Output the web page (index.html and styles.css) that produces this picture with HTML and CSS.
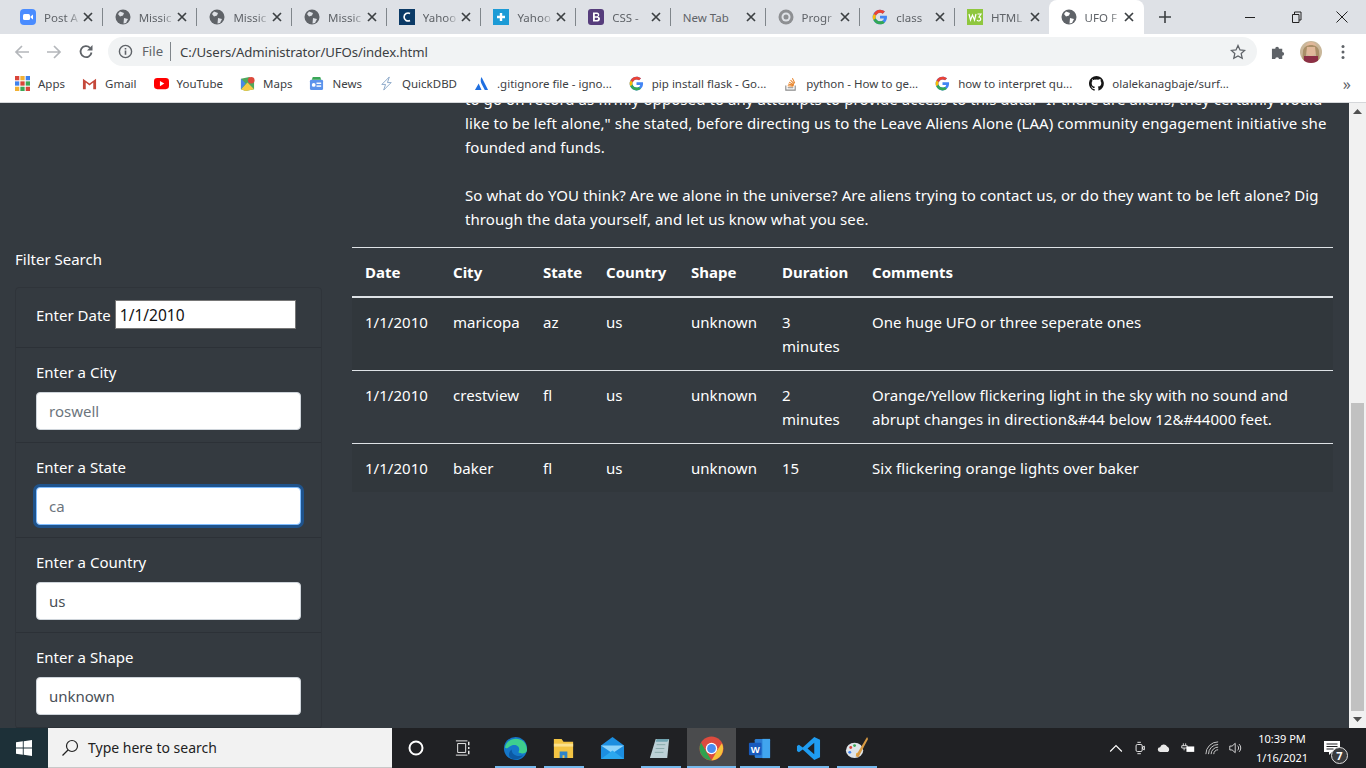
FILE: index.html
```html
<!doctype html>
<html>
	<head>
		<title>UFO Finder</title>
		<link rel="stylesheet" href="styles.css">
	</head>
	<body>

		<svg class="defs" width="0" height="0">
			<defs>
				<g id="g-logo">
					<path d="M44.500 20H24v8.500h11.800C34.700 33.900 30.100 37 24 37c-7.200 0-13-5.800-13-13s5.800-13 13-13c3.100 0 5.900 1.100 8.100 2.900l6.400-6.400C34.600 4.100 29.600 2 24 2 11.800 2 2 11.800 2 24s9.800 22 22 22c11 0 21-8 21-22 0-1.300-.2-2.700-.5-4z" fill="#4285f4"/>
					<path d="M5.300 14.700l7 5.100C14.200 15.100 18.700 11 24 11c3.100 0 5.900 1.100 8.100 2.900l6.400-6.400C34.600 4.100 29.600 2 24 2 15.500 2 8.100 6.900 5.300 14.700z" fill="#ea4335"/>
					<path d="M24 46c5.400 0 10.300-1.800 14.100-5.100l-6.800-5.500C29.200 36.900 26.700 37 24 37c-6 0-11.100-4-12.800-9.500l-7 5.400C7.900 40.700 15.400 46 24 46z" fill="#34a853"/>
					<path d="M5.300 14.700C3 18.500 2 21 2 24s1 6 2.200 8.900l7-5.400C10.600 26.500 11 25 11 24s-.2-2.800.8-4.200z" fill="#fbbc05"/>
				</g>
				<g id="globe">
					<circle cx="8" cy="8" r="7.500" fill="#5f6368"/>
					<path d="M5 2.500 9 4 8 6.500 5 7.500 3 5zM9 9l4 1-2 4-2.500.5z" fill="#dee1e6"/>
				</g>
				<path id="close" d="M1 1l8 8M9 1 1 9" stroke="#3c4043" stroke-width="1.700" fill="none"/>
			</defs>
		</svg>

		<div class="tabstrip">
			<div class="tab"><svg class="fav" viewBox="0 0 16 16"><rect width="16" height="16" rx="4" fill="#4a8cff"/><rect x="3" y="5" width="7" height="6" rx="1.500" fill="#fff"/><path d="M10.500 7.500 13 5.500v5l-2.500-2z" fill="#fff"/></svg><span class="tab-title">Post A</span><svg class="tab-x" viewBox="0 0 10 10"><use href="#close"/></svg></div>
			<div class="tab"><svg class="fav" viewBox="0 0 16 16"><use href="#globe"/></svg><span class="tab-title">Missic</span><svg class="tab-x" viewBox="0 0 10 10"><use href="#close"/></svg></div>
			<div class="tab"><svg class="fav" viewBox="0 0 16 16"><use href="#globe"/></svg><span class="tab-title">Missic</span><svg class="tab-x" viewBox="0 0 10 10"><use href="#close"/></svg></div>
			<div class="tab"><svg class="fav" viewBox="0 0 16 16"><use href="#globe"/></svg><span class="tab-title">Missic</span><svg class="tab-x" viewBox="0 0 10 10"><use href="#close"/></svg></div>
			<div class="tab"><svg class="fav" viewBox="0 0 16 16"><rect width="16" height="16" fill="#0b3a66"/><path d="M11 4.500A4 4 0 1 0 11 11.500" fill="none" stroke="#fff" stroke-width="1.600"/></svg><span class="tab-title">Yahoo</span><svg class="tab-x" viewBox="0 0 10 10"><use href="#close"/></svg></div>
			<div class="tab"><svg class="fav" viewBox="0 0 16 16"><rect width="16" height="16" fill="#1c9bd6"/><path d="M8 4v8M4 8h8" stroke="#fff" stroke-width="2.400"/></svg><span class="tab-title">Yahoo</span><svg class="tab-x" viewBox="0 0 10 10"><use href="#close"/></svg></div>
			<div class="tab"><svg class="fav" viewBox="0 0 16 16"><rect width="16" height="16" rx="3" fill="#563d7c"/><path d="M5 3.500h4a2.200 2.200 0 0 1 1 4.200A2.300 2.300 0 0 1 9 12.500H5zM6.800 5v2.300H8.800a1.150 1.150 0 0 0 0-2.300zM6.800 8.700V11H9a1.150 1.150 0 0 0 0-2.300z" fill="#fff" fill-rule="evenodd"/></svg><span class="tab-title">CSS -</span><svg class="tab-x" viewBox="0 0 10 10"><use href="#close"/></svg></div>
			<div class="tab"><span class="tab-title tab-plain">New Tab</span><svg class="tab-x" viewBox="0 0 10 10"><use href="#close"/></svg></div>
			<div class="tab"><svg class="fav" viewBox="0 0 16 16"><circle cx="8" cy="8" r="7.500" fill="#8d8f92"/><circle cx="8" cy="8" r="4.500" fill="#dee1e6"/><circle cx="8" cy="8" r="2.500" fill="#8d8f92"/></svg><span class="tab-title">Progr</span><svg class="tab-x" viewBox="0 0 10 10"><use href="#close"/></svg></div>
			<div class="tab"><svg class="fav" viewBox="0 0 48 48"><use href="#g-logo"/></svg><span class="tab-title">class</span><svg class="tab-x" viewBox="0 0 10 10"><use href="#close"/></svg></div>
			<div class="tab tab-last"><svg class="fav" viewBox="0 0 16 16"><rect width="16" height="16" fill="#8fc73e"/><path d="M2 5l1.500 6L5.500 6l2 5L9 5M10.500 5H14L12 8a2 2 0 1 1-2 3" fill="none" stroke="#fff" stroke-width="1.200"/></svg><span class="tab-title">HTML</span><svg class="tab-x" viewBox="0 0 10 10"><use href="#close"/></svg></div>
			<div class="tab tab-active"><svg class="fav" viewBox="0 0 16 16"><circle cx="8" cy="8" r="7.500" fill="#5f6368"/><path d="M5 2.500 9 4 8 6.500 5 7.500 3 5zM9 9l4 1-2 4-2.500.5z" fill="#fff"/></svg><span class="tab-title">UFO F</span><svg class="tab-x" viewBox="0 0 10 10"><use href="#close"/></svg></div>
			<svg class="new-tab" viewBox="0 0 12 12"><path d="M6 0v12M0 6h12" stroke="#3c4043" stroke-width="1.600"/></svg>
			<div class="win-btns">
				<svg viewBox="0 0 12 12"><path d="M1 6.500h10" stroke="#222" stroke-width="1"/></svg>
				<svg viewBox="0 0 12 12"><path d="M2.500 3.500h6.500v8h-6.500zM4.500 3.500V1h6.500v8H9" fill="none" stroke="#222" stroke-width="1"/></svg>
				<svg viewBox="0 0 12 12"><path d="M.5.500l11 11M11.500.500l-11 11" stroke="#222" stroke-width="1"/></svg>
			</div>
		</div>

		<div class="toolbar">
			<svg class="nav-icon" viewBox="0 0 16 16"><path d="M15 8H2M8 2 2 8l6 6" fill="none" stroke="#b4b7bb" stroke-width="1.700"/></svg>
			<svg class="nav-icon" viewBox="0 0 16 16"><path d="M1 8h13M8 2l6 6-6 6" fill="none" stroke="#b4b7bb" stroke-width="1.700"/></svg>
			<svg class="nav-icon" viewBox="0 0 16 16"><path d="M13.500 8.500A5.500 5.500 0 1 1 12 3.800" fill="none" stroke="#5f6368" stroke-width="1.800"/><path d="M14.500 1v5.500H9z" fill="#5f6368"/></svg>
			<div class="omnibox">
				<svg class="info" viewBox="0 0 16 16"><circle cx="8" cy="8" r="6.500" fill="none" stroke="#5f6368" stroke-width="1.500"/><path d="M8 7v4.500M8 4.200v1.600" stroke="#5f6368" stroke-width="1.700"/></svg>
				<span class="scheme">File</span>
				<span class="url">C:/Users/Administrator/UFOs/index.html</span>
				<svg class="star" viewBox="0 0 16 16"><path d="M8 1.500l2 4.400 4.700.5-3.500 3.200 1 4.700L8 11.900l-4.200 2.400 1-4.700L1.300 6.400 6 5.900z" fill="none" stroke="#5f6368" stroke-width="1.300"/></svg>
			</div>
			<svg class="puzzle" viewBox="0 0 16 16"><path d="M1 5h3.500a2 2 0 1 1 4 0H12v3.500a2 2 0 1 1 0 4V16H8.500a2 2 0 1 0-4 0H1z" fill="#5f6368"/></svg>
			<svg class="avatar" viewBox="0 0 22 22"><defs><clipPath id="av"><circle cx="11" cy="11" r="11"/></clipPath></defs><g clip-path="url(#av)"><rect width="22" height="22" fill="#c9b79a"/><ellipse cx="11" cy="8" rx="6" ry="7" fill="#e0b89a"/><path d="M3 10C4 2 18 2 19 10l1 12h-3L15 6H7L5 22H2z" fill="#a98f68"/><rect x="4" y="15" width="14" height="7" fill="#8c2f45"/></g></svg>
			<svg class="kebab" viewBox="0 0 4 16"><circle cx="2" cy="2.500" r="1.500" fill="#5f6368"/><circle cx="2" cy="8" r="1.500" fill="#5f6368"/><circle cx="2" cy="13.500" r="1.500" fill="#5f6368"/></svg>
		</div>

		<div class="bookmarks">
			<div class="mark"><svg viewBox="0 0 14 14"><rect width="4" height="4" fill="#d9453a"/><rect x="5" width="4" height="4" fill="#f2b134"/><rect x="10" width="4" height="4" fill="#3f82ee"/><rect y="5" width="4" height="4" fill="#3f82ee"/><rect x="5" y="5" width="4" height="4" fill="#d9453a"/><rect x="10" y="5" width="4" height="4" fill="#3aa757"/><rect y="10" width="4" height="4" fill="#f2b134"/><rect x="5" y="10" width="4" height="4" fill="#3aa757"/><rect x="10" y="10" width="4" height="4" fill="#d9453a"/></svg>Apps</div>
			<div class="mark"><svg viewBox="0 0 16 16"><path d="M1 3v11h3V7l4 3 4-3v7h3V3l-7 5z" fill="#c5483a"/></svg>Gmail</div>
			<div class="mark"><svg viewBox="0 0 16 16"><rect y="2" width="16" height="12" rx="3.500" fill="#f00"/><path d="M6.300 5.200 11 8l-4.700 2.800z" fill="#fff"/></svg>YouTube</div>
			<div class="mark"><svg viewBox="0 0 16 16"><path d="M1 3l9-2 5 4v9L6 16l-5-2z" fill="#4fa85c"/><path d="M1 14 8 7l7 7-9 2z" fill="#f7c945"/><path d="M1 3l5 5-5 6z" fill="#4a86e8"/><circle cx="12" cy="4.500" r="3.500" fill="#dd4a3c"/></svg>Maps</div>
			<div class="mark"><svg viewBox="0 0 16 16"><rect x="1" y="4" width="14" height="11" rx="1.500" fill="#5b93ec"/><path d="M3 4l1-3h8l1 3z" fill="#3aa757"/><rect x="8" y="7" width="5" height="1.500" fill="#fff"/><rect x="8" y="10" width="5" height="1.500" fill="#fff"/><circle cx="5" cy="9.500" r="2" fill="#fff"/></svg>News</div>
			<div class="mark"><svg viewBox="0 0 16 16"><path d="M11 1 3 9h4l-2 6 8-8H9z" fill="none" stroke="#8aa6c8" stroke-width="1"/></svg>QuickDBD</div>
			<div class="mark"><svg viewBox="0 0 16 16"><path d="M8 1c-1.500 3-1 6 1 9l2.500 5H15zM5 8 1 15h7z" fill="#1f6fe0"/></svg>.gitignore file - igno...</div>
			<div class="mark"><svg viewBox="0 0 48 48"><use href="#g-logo"/></svg>pip install flask - Go...</div>
			<div class="mark"><svg viewBox="0 0 16 16"><path d="M3 10v5h10v-5M5 12.500h6" fill="none" stroke="#8a8a8a" stroke-width="1.200"/><path d="M5 10.500l6 .5M5.500 8.500l6 1.500M6.500 6.500l5 2.800M8 4.500l4 4M10 2.500l2.500 5" stroke="#e8862e" stroke-width="1.100"/></svg>python - How to ge...</div>
			<div class="mark"><svg viewBox="0 0 48 48"><use href="#g-logo"/></svg>how to interpret qu...</div>
			<div class="mark"><svg viewBox="0 0 16 16"><path d="M8 0a8 8 0 0 0-2.500 15.600c.4.100.5-.2.500-.4v-1.400c-2.200.5-2.700-1-2.700-1-.4-.9-.9-1.200-.9-1.200-.7-.5.100-.5.100-.5.800.1 1.200.8 1.200.8.700 1.200 1.900.9 2.300.7.100-.5.300-.9.500-1.100-1.800-.2-3.600-.9-3.600-4 0-.9.300-1.600.8-2.100-.1-.2-.4-1 .1-2.100 0 0 .7-.2 2.200.8a7.600 7.600 0 0 1 4 0c1.500-1 2.200-.8 2.200-.8.400 1.100.2 1.900.1 2.100.5.600.8 1.300.8 2.100 0 3.100-1.900 3.700-3.700 3.900.3.300.6.800.6 1.500v2.200c0 .2.100.5.600.4A8 8 0 0 0 8 0z" fill="#161616"/></svg>olalekanagbaje/surf...</div>
			<span class="more">»</span>
		</div>

		<div class="viewport">
			<div class="page">
				<div class="page-row">
					<div class="side">
						<div class="filter-title">Filter Search</div>
						<ul class="filters">
							<li class="filter filter-date">
								<label>Enter Date</label>
								<input class="date-input" type="text" value="1/1/2010">
							</li>
							<li class="filter">
								<label>Enter a City</label>
								<input class="field" type="text" placeholder="roswell">
							</li>
							<li class="filter">
								<label>Enter a State</label>
								<input class="field field-focus" type="text" placeholder="ca">
							</li>
							<li class="filter">
								<label>Enter a Country</label>
								<input class="field" type="text" value="us">
							</li>
							<li class="filter">
								<label>Enter a Shape</label>
								<input class="field" type="text" value="unknown">
							</li>
						</ul>
					</div>
					<div class="main">
						<div class="article">
							<p>to go on record as firmly opposed to any attempts to provide access to this data. "If there are aliens, they certainly would like to be left alone," she stated, before directing us to the Leave Aliens Alone (LAA) community engagement initiative she founded and funds.</p>
							<p>So what do YOU think? Are we alone in the universe? Are aliens trying to contact us, or do they want to be left alone? Dig through the data yourself, and let us know what you see.</p>
						</div>
						<table class="ufo-table">
							<colgroup>
								<col class="col-date"><col class="col-city"><col class="col-state"><col class="col-country"><col class="col-shape"><col class="col-duration"><col>
							</colgroup>
							<thead>
								<tr><th>Date</th><th>City</th><th>State</th><th>Country</th><th>Shape</th><th>Duration</th><th>Comments</th></tr>
							</thead>
							<tbody>
								<tr class="odd"><td>1/1/2010</td><td>maricopa</td><td>az</td><td>us</td><td>unknown</td><td>3 minutes</td><td>One huge UFO or three seperate ones</td></tr>
								<tr><td>1/1/2010</td><td>crestview</td><td>fl</td><td>us</td><td>unknown</td><td>2 minutes</td><td>Orange/Yellow flickering light in the sky with no sound and abrupt changes in direction&amp;#44 below 12&amp;#44000 feet.</td></tr>
								<tr class="odd"><td>1/1/2010</td><td>baker</td><td>fl</td><td>us</td><td>unknown</td><td>15</td><td>Six flickering orange lights over baker</td></tr>
							</tbody>
						</table>
					</div>
				</div>
			</div>
			<div class="scrollbar">
				<svg viewBox="0 0 9 5"><path d="M0 5l4.500-5L9 5z" fill="#505050"/></svg>
				<div class="scroll-track"><div class="scroll-thumb"></div></div>
				<svg viewBox="0 0 9 5"><path d="M0 0l4.500 5L9 0z" fill="#505050"/></svg>
			</div>
		</div>

		<div class="taskbar">
			<div class="start"><svg viewBox="0 0 16 16"><path d="M0 2.300 6.800 1.300V7.500H0zM7.700 1.200 16 0V7.500H7.700zM0 8.500H6.800V14.700L0 13.700zM7.700 8.500H16V16L7.700 14.800z" fill="#fff"/></svg></div>
			<div class="search-box">
				<svg viewBox="0 0 18 18"><circle cx="11" cy="7" r="5.500" fill="none" stroke="#222" stroke-width="1.200"/><path d="M7 11 1.500 16.500" stroke="#222" stroke-width="1.200"/></svg>
				<span>Type here to search</span>
			</div>
			<div class="task-btn"><svg viewBox="0 0 16 16"><circle cx="8" cy="8" r="6.500" fill="none" stroke="#fff" stroke-width="2"/></svg></div>
			<div class="task-btn"><svg viewBox="0 0 18 18"><path d="M1 1h13M1 17h13M3 4h9v10H3z" fill="none" stroke="#fff" stroke-width="1"/><path d="M15.500 2v4M15.500 8v2M15.500 12v4" stroke="#fff" stroke-width="1.500"/></svg></div>
			<div class="task-icon task-first task-open"><svg viewBox="0 0 26 26"><circle cx="13" cy="13" r="12" fill="#1577c9"/><path d="M2 12C4 0 24 -1 25 14c0 5-7 5-9 3 3-5-2-9-7-7-3 1-5 4-7 2z" fill="#3ecf8e"/><path d="M9 14c0 6 6 8 12 6-3 4-9 6-13 3-3-2-2-7 1-9z" fill="#0c59a4"/></svg></div>
			<div class="task-icon task-open"><svg viewBox="0 0 26 26"><path d="M3 3h8l2 3h10v17H3z" fill="#f3c443"/><rect x="3" y="8" width="20" height="3" fill="#fbe18d"/><path d="M9 23v-7h8v7h-3v-3h-2v3z" fill="#2e84c9"/></svg></div>
			<div class="task-icon"><svg viewBox="0 0 26 26"><path d="M13 1 25 10v14H1V10z" fill="#1c8ee0"/><path d="M1 10l12 8 12-8" fill="#8fd4fa"/><path d="M1 24l12-9 12 9z" fill="#2ba7ee"/></svg></div>
			<div class="task-icon task-open"><svg viewBox="0 0 26 26"><path d="M8 3h14l-2 20H2z" fill="#bcd0d6"/><path d="M9 3h13l-2 3H8z" fill="#6fa3b0"/><path d="M9 9l9 0M8 13l9 0M7 17l9 0" stroke="#8aa" stroke-width="1"/></svg></div>
			<div class="task-icon task-active"><svg viewBox="0 0 48 48"><circle cx="24" cy="24" r="23" fill="#dd4b3e"/><path d="M24 47 36 26 44 14A23 23 0 0 1 24 47z" fill="#f6c33b"/><path d="M24 47A23 23 0 0 1 4 13l12 21z" fill="#2fa14f"/><circle cx="24" cy="24" r="11" fill="#fff"/><circle cx="24" cy="24" r="8.500" fill="#4a8df0"/></svg></div>
			<div class="task-icon task-open"><svg viewBox="0 0 26 26"><rect x="8" y="3" width="16" height="20" rx="1.500" fill="#2b7cd3"/><rect x="16" y="3" width="8" height="20" fill="#41a5ee"/><rect x="2" y="7" width="13" height="13" rx="1" fill="#185abd"/><text class="word-w" x="8.500" y="17.500">W</text></svg></div>
			<div class="task-icon task-open"><svg viewBox="0 0 26 26"><path d="M19 1 25 4v18l-6 3L7 14l-4 3-2-1.500v-5L3 9l4 3z" fill="#1f9cf0"/><path d="M19 7 12 13l7 6z" fill="#202124"/></svg></div>
			<div class="task-icon task-open"><svg viewBox="0 0 26 26"><ellipse cx="11" cy="15" rx="9" ry="8" fill="#dfe5e8"/><circle cx="7" cy="12" r="1.500" fill="#d9453a"/><circle cx="11" cy="10" r="1.500" fill="#3aa757"/><circle cx="6" cy="17" r="1.500" fill="#3f82ee"/><circle cx="14" cy="19" r="1.500" fill="#f2b134"/><path d="M24 1l1 2-10 19-3-1z" fill="#d89a43"/></svg></div>
			<div class="tray">
				<svg class="tray-icon" viewBox="0 0 12 12"><path d="M1 9l5-5 5 5" fill="none" stroke="#fff" stroke-width="1"/></svg>
				<svg class="tray-icon" viewBox="0 0 12 16"><rect x="1.500" y="4" width="7" height="8" rx="1.500" fill="none" stroke="#fff"/><path d="M9 7l2-1v4l-2-1zM3 1.500h4M3 14.500h4" fill="none" stroke="#fff"/></svg>
				<svg class="tray-icon" viewBox="0 0 18 12"><path d="M4 11a3 3 0 0 1 0-6 5 5 0 0 1 9-1 4 4 0 0 1 1 7z" fill="#e8e8e8"/></svg>
				<svg class="tray-icon" viewBox="0 0 18 14"><path d="M3 1v3M6 1v3M1 4h7v3H1zM4 7v3" fill="none" stroke="#fff"/><rect x="7" y="5" width="10" height="7" fill="#fff"/></svg>
				<svg class="tray-icon" viewBox="0 0 16 16"><path d="M1 15A14 14 0 0 1 15 1M4 15A11 11 0 0 1 15 4M7 15a8 8 0 0 1 8-8M10 15a5 5 0 0 1 5-5" fill="none" stroke="#ddd" stroke-width="1"/></svg>
				<svg class="tray-icon" viewBox="0 0 18 16"><path d="M1 5.500h3L8 2v12L4 10.500H1z" fill="none" stroke="#fff"/><path d="M11 5a4 4 0 0 1 0 6M13 3a7 7 0 0 1 0 10" fill="none" stroke="#fff"/></svg>
			</div>
			<div class="clock"><span>10:39 PM</span><span>1/16/2021</span></div>
			<div class="notify">
				<svg viewBox="0 0 16 14"><path d="M0 0h16v11H8l-3 3v-3H0z" fill="#fff"/><path d="M2.500 3h11M2.500 5.500h11M2.500 8h7" stroke="#202124" stroke-width="1"/></svg>
				<span class="notify-count">7</span>
			</div>
		</div>

	</body>
</html>
```

FILE: styles.css
```css
* {
	box-sizing: border-box;
	margin: 0;
	padding: 0;
}

html,
body {
	height: 100%;
	overflow: hidden;
}

body {
	display: flex;
	flex-direction: column;
	font-family: "Noto Sans", "Open Sans", sans-serif;
	font-size: 15px;
	color: #fff;
	background: #343a40;
}

.defs {
	position: absolute;
}

/* browser chrome */
.tabstrip {
	height: 34px;
	flex: none;
	display: flex;
	align-items: center;
	padding-left: 8px;
	background: #dee1e6;
}
.tab {
	width: 94.700px;
	height: 34px;
	flex: none;
	display: flex;
	align-items: center;
	padding: 0 10px 0 12px;
	position: relative;
	color: #5f6368;
	font-size: 11.500px;
}
.tab::after {
	content: "";
	position: absolute;
	right: 0;
	top: 8px;
	height: 18px;
	width: 1px;
	background: #80868b;
}
.fav {
	width: 16px;
	height: 16px;
	flex: none;
	margin-right: 8px;
}
.tab-title {
	flex: 1;
	min-width: 0;
	overflow: hidden;
	white-space: nowrap;
	-webkit-mask-image: linear-gradient(to right, #000 65%, transparent 100%);
	mask-image: linear-gradient(to right, #000 65%, transparent 100%);
}
.tab-plain {
	-webkit-mask-image: none;
	mask-image: none;
}
.tab-x {
	width: 10px;
	height: 10px;
	flex: none;
	margin-left: 2px;
}
.tab-last::after {
	display: none;
}
.tab-active {
	background: #fff;
	border-radius: 8px 8px 0 0;
	width: 95px;
	margin-left: -1px;
}
.tab-active::after {
	display: none;
}
.new-tab {
	width: 12px;
	height: 12px;
	margin-left: 15px;
}
.win-btns {
	margin-left: auto;
	display: flex;
	align-items: center;
	align-self: flex-start;
	gap: 34px;
	padding: 11px 18px 0 0;
}
.win-btns svg {
	width: 12px;
	height: 12px;
}

.toolbar {
	height: 35px;
	flex: none;
	display: flex;
	align-items: center;
	padding-left: 14px;
	background: #fff;
}
.nav-icon {
	width: 16px;
	height: 16px;
	margin-right: 16px;
}
.omnibox {
	width: 1149px;
	height: 29px;
	margin-left: -2px;
	display: flex;
	align-items: center;
	padding: 0 11px 0 10px;
	border-radius: 15px;
	background: #f1f3f4;
	color: #3c4043;
	font-size: 13.200px;
}
.info {
	width: 15px;
	height: 15px;
	margin-right: 9px;
}
.scheme {
	color: #5f6368;
	padding-right: 7px;
	border-right: 1px solid #80868b;
	line-height: 19px;
}
.url {
	margin-left: 9px;
	letter-spacing: -.1px;
}
.star {
	width: 16px;
	height: 16px;
	margin-left: auto;
}
.puzzle {
	width: 15px;
	height: 15px;
	margin-left: 14px;
}
.avatar {
	width: 22px;
	height: 22px;
	margin-left: 14px;
}
.kebab {
	width: 4px;
	height: 16px;
	margin-left: 19px;
}

.bookmarks {
	height: 34px;
	flex: none;
	display: flex;
	align-items: center;
	padding: 0 15px 4px;
	gap: 17px;
	background: #fff;
	border-bottom: 1px solid #d5d7da;
	color: #3c4043;
	font-size: 11.500px;
	white-space: nowrap;
}
.mark {
	display: flex;
	align-items: center;
	gap: 8px;
}
.mark svg {
	width: 15px;
	height: 15px;
}
.more {
	margin-left: auto;
	font-size: 16px;
	color: #5f6368;
}

/* page */
.viewport {
	flex: 1;
	min-height: 0;
	display: flex;
}
.page {
	flex: 1;
	min-width: 0;
	overflow: hidden;
	background: #343a40;
}
.page-row {
	display: flex;
	margin-top: -16px;
}
.side {
	width: 337px;
	flex: none;
	padding: 160px 15px 0;
}
.main {
	flex: 1;
	min-width: 0;
	padding: 0 16px 0 15px;
}
.filter-title {
	line-height: 24px;
	margin-bottom: 16px;
}
.filters {
	list-style: none;
	background: #343a40;
	border: 1px solid #2f343a;
	border-radius: 4px;
}
.filter {
	height: 95px;
	padding: 12px 20px;
	border-bottom: 1px solid #2c3137;
}
.filter label {
	display: block;
	line-height: 24px;
	margin-bottom: 8px;
}
.filter-date {
	height: 60px;
	display: flex;
	align-items: center;
	padding-bottom: 18px;
}
.filter-date label {
	margin: 0 4px 0 0;
}
.date-input {
	width: 181px;
	height: 29px;
	padding: 1px 4px;
	font: inherit;
	font-size: 15.500px;
	color: #111;
	background: #fff;
	border: 1px solid #767676;
}
.field {
	display: block;
	width: 265px;
	height: 38px;
	padding: 6px 12px;
	font: inherit;
	color: #495057;
	background: #fff;
	border: 1px solid #ced4da;
	border-radius: 4px;
}
.field::placeholder {
	color: #6c757d;
	opacity: 1;
}
.field-focus {
	border-color: #80bdff;
	box-shadow: 0 0 0 3px rgba(0,123,255,.4);
}

.article {
	padding-left: 113px;
	line-height: 24px;
	letter-spacing: .07px;
	margin-bottom: 16px;
}
.article p {
	margin-bottom: 24px;
}
.article p:last-child {
	margin-bottom: 0;
}

.ufo-table {
	width: 100%;
	table-layout: fixed;
	border-collapse: collapse;
}
.col-date { width: 88px; }
.col-city { width: 90px; }
.col-state { width: 63px; }
.col-country { width: 85px; }
.col-shape { width: 91px; }
.col-duration { width: 90px; }
.ufo-table th,
.ufo-table td {
	padding: 12px 12px 12px 13px;
	line-height: 24px;
	text-align: left;
	vertical-align: top;
	border-top: 1px solid #dee2e6;
}
.ufo-table td {
	letter-spacing: .04px;
}
.ufo-table th {
	font-weight: bold;
	border-bottom: 2px solid #dee2e6;
	white-space: nowrap;
}
.odd {
	background: rgba(0,0,0,.05);
}

/* scrollbar */
.scrollbar {
	width: 17px;
	flex: none;
	display: flex;
	flex-direction: column;
	align-items: center;
	padding: 6px 0;
	background: #f1f1f1;
}
.scrollbar svg {
	width: 9px;
	height: 5px;
	flex: none;
}
.scroll-track {
	flex: 1;
	width: 100%;
	padding: 283px 2px 0;
	margin: 6px 0;
}
.scroll-thumb {
	height: 100%;
	background: #c1c1c1;
}

/* windows taskbar */
.taskbar {
	height: 40px;
	flex: none;
	display: flex;
	align-items: center;
	background: #202124;
}
.start {
	width: 48px;
	height: 40px;
	display: flex;
	align-items: center;
	justify-content: center;
	background: #1d3038;
}
.start svg {
	width: 16px;
	height: 16px;
}
.search-box {
	width: 344px;
	height: 40px;
	display: flex;
	align-items: center;
	gap: 9px;
	padding-left: 13px;
	background: #f2f2f2;
	border-bottom: 1px solid #c8c8c8;
	color: #222;
	font-size: 14px;
}
.search-box svg {
	width: 18px;
	height: 18px;
}
.task-btn {
	width: 47.500px;
	height: 40px;
	flex: none;
	display: flex;
	align-items: center;
	justify-content: center;
}
.task-btn svg {
	width: 16px;
	height: 16px;
}
.task-icon {
	width: 48.500px;
	height: 40px;
	flex: none;
	display: flex;
	align-items: center;
	justify-content: center;
	position: relative;
}
.task-icon svg {
	width: 25px;
	height: 25px;
}
.task-first {
	margin-left: 4px;
}
.task-open::after {
	content: "";
	position: absolute;
	left: 4px;
	right: 4px;
	bottom: 0;
	height: 2px;
	background: #76b9ed;
}
.task-active {
	margin-left: 2px;
	background: #4a4b4d;
}
.task-active::after {
	content: "";
	position: absolute;
	left: 0;
	right: 0;
	bottom: 0;
	height: 2px;
	background: #76b9ed;
}
.word-w {
	font-family: "Liberation Sans", sans-serif;
	font-size: 10px;
	font-weight: bold;
	fill: #fff;
	text-anchor: middle;
}
.tray {
	margin-left: auto;
	display: flex;
	align-items: center;
	gap: 10px;
}
.tray-icon {
	width: 14px;
	height: 14px;
}
.clock {
	width: 68px;
	margin-left: 5px;
	display: flex;
	flex-direction: column;
	align-items: center;
	gap: 3px;
	font-size: 11px;
	line-height: 16px;
	color: #fff;
}
.notify {
	width: 50px;
	height: 40px;
	position: relative;
	padding: 13px 0 0 8px;
}
.notify svg {
	display: block;
	width: 16px;
	height: 14px;
}
.notify-count {
	position: absolute;
	left: 15px;
	top: 19px;
	width: 17px;
	height: 17px;
	border-radius: 50%;
	background: #3a3b3d;
	border: 1px solid #ddd;
	font-size: 11px;
	font-weight: bold;
	line-height: 15px;
	text-align: center;
}
```
